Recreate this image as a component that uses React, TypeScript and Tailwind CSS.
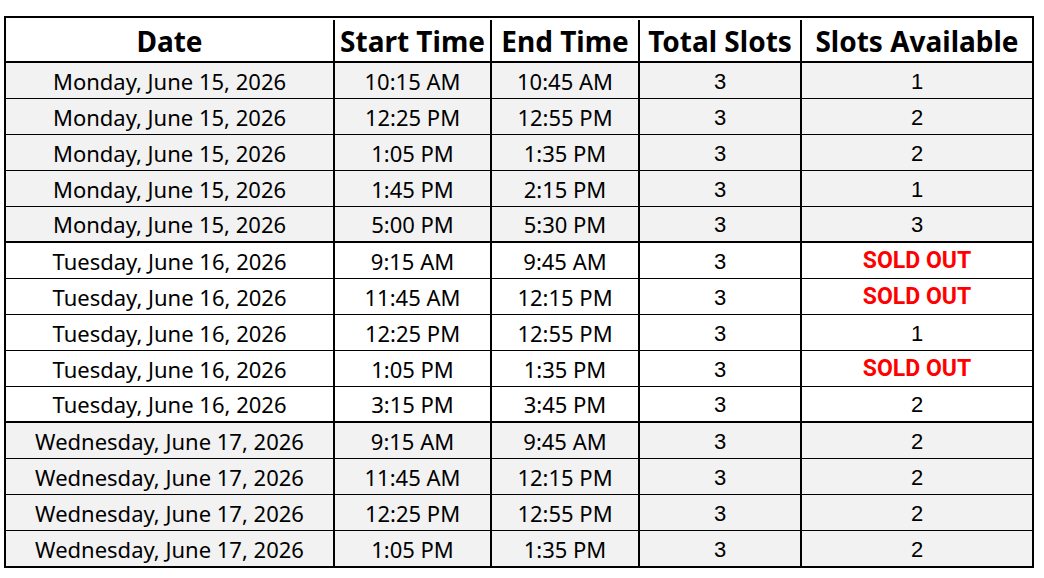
import React from "react";

type Row = { date: string; start: string; end: string; total: string; avail: string; bg: "gray" | "white"; groupEnd?: boolean };

const rows: Row[] = [
  { date: "Monday, June 15, 2026", start: "10:15 AM", end: "10:45 AM", total: "3", avail: "1", bg: "gray" },
  { date: "Monday, June 15, 2026", start: "12:25 PM", end: "12:55 PM", total: "3", avail: "2", bg: "gray" },
  { date: "Monday, June 15, 2026", start: "1:05 PM", end: "1:35 PM", total: "3", avail: "2", bg: "gray" },
  { date: "Monday, June 15, 2026", start: "1:45 PM", end: "2:15 PM", total: "3", avail: "1", bg: "gray" },
  { date: "Monday, June 15, 2026", start: "5:00 PM", end: "5:30 PM", total: "3", avail: "3", bg: "gray", groupEnd: true },
  { date: "Tuesday, June 16, 2026", start: "9:15 AM", end: "9:45 AM", total: "3", avail: "SOLD OUT", bg: "white" },
  { date: "Tuesday, June 16, 2026", start: "11:45 AM", end: "12:15 PM", total: "3", avail: "SOLD OUT", bg: "white" },
  { date: "Tuesday, June 16, 2026", start: "12:25 PM", end: "12:55 PM", total: "3", avail: "1", bg: "white" },
  { date: "Tuesday, June 16, 2026", start: "1:05 PM", end: "1:35 PM", total: "3", avail: "SOLD OUT", bg: "white" },
  { date: "Tuesday, June 16, 2026", start: "3:15 PM", end: "3:45 PM", total: "3", avail: "2", bg: "white", groupEnd: true },
  { date: "Wednesday, June 17, 2026", start: "9:15 AM", end: "9:45 AM", total: "3", avail: "2", bg: "gray" },
  { date: "Wednesday, June 17, 2026", start: "11:45 AM", end: "12:15 PM", total: "3", avail: "2", bg: "gray" },
  { date: "Wednesday, June 17, 2026", start: "12:25 PM", end: "12:55 PM", total: "3", avail: "2", bg: "gray" },
  { date: "Wednesday, June 17, 2026", start: "1:05 PM", end: "1:35 PM", total: "3", avail: "2", bg: "gray" },
];

const aptos = "font-['Noto_Sans',sans-serif]";
const arial = "font-['Liberation_Sans',Arial,sans-serif]";

export default function App() {
  return (
    <div className="w-[1044px] h-[578px] bg-white pt-[16px] pl-[4px]">
      <div className="w-[1030px] border-2 border-black text-black">
        <div className={`grid grid-cols-[329px_157px_148px_162px_230px] h-[45px] border-b-2 border-black bg-white ${aptos} font-bold text-[28px] pt-[2px]`}>
          <div className="flex items-center justify-center border-r-2 border-black">Date</div>
          <div className="flex items-center justify-center border-r-2 border-black">Start Time</div>
          <div className="flex items-center justify-center border-r-2 border-black">End Time</div>
          <div className="flex items-center justify-center border-r-2 border-black">Total Slots</div>
          <div className="flex items-center justify-center">Slots Available</div>
        </div>
        {rows.map((r, i) => {
          const last = i === rows.length - 1;
          const rowBorder = last ? "" : r.groupEnd ? "border-b-2 border-black h-[36px]" : "border-b border-black h-[36px]";
          const bg = r.bg === "gray" ? "bg-[#f2f2f2]" : "bg-white";
          return (
            <div key={i} className={`grid grid-cols-[329px_157px_148px_162px_230px] ${last ? "h-[35px]" : ""} ${rowBorder} ${bg}`}>
              <div className={`flex items-center justify-center border-r-2 border-black ${aptos} text-[22px] pt-[1px]`}>{r.date}</div>
              <div className={`flex items-center justify-center border-r-2 border-black ${aptos} text-[22px] pt-[1px]`}>{r.start}</div>
              <div className={`flex items-center justify-center border-r-2 border-black ${aptos} text-[22px] pt-[1px]`}>{r.end}</div>
              <div className={`flex items-center justify-center border-r-2 border-black ${arial} text-[22px] pt-[1px]`}>{r.total}</div>
              {r.avail === "SOLD OUT" ? (
                <div className="flex items-center justify-center font-['Roboto',sans-serif] font-bold text-[23px] text-[#ff0000] pt-[1px]">SOLD OUT</div>
              ) : (
                <div className={`flex items-center justify-center ${arial} text-[22px] pt-[1px]`}>{r.avail}</div>
              )}
            </div>
          );
        })}
      </div>
    </div>
  );
}
